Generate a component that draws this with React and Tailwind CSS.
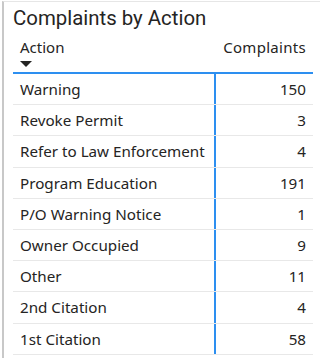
import React from "react";

const rows = [
  ["Warning", "150"],
  ["Revoke Permit", "3"],
  ["Refer to Law Enforcement", "4"],
  ["Program Education", "191"],
  ["P/O Warning Notice", "1"],
  ["Owner Occupied", "9"],
  ["Other", "11"],
  ["2nd Citation", "4"],
  ["1st Citation", "58"],
];

export default function App() {
  return (
    <div
      className="w-[320px] h-[358px] bg-white overflow-hidden text-[#252423]"
      style={{ fontFamily: '"Noto Sans", "Open Sans", sans-serif' }}
    >
      <div className="ml-[2px] mt-[1px] h-[357px] border-l-2 border-t border-l-[#c8c8c8] border-t-[#e6e6e6] pl-[9px] pr-[7px]">
        <div
          className="h-[34px] pt-[2px] text-[20.4px] leading-[28px]"
          style={{ fontFamily: 'Roboto, "Noto Sans", sans-serif' }}
        >
          Complaints by Action
        </div>
        <div className="w-[300px]">
          <div className="flex h-[38px] border-b-2 border-[#2d8ff0] text-[15px] text-[#252423]">
            <div className="w-[203px] pl-[7px] pt-[1px] leading-[20px]">
              <div>Action</div>
              <svg width="12" height="6" viewBox="0 0 12 6" className="mt-[4px]">
                <path d="M0 0 H12 L6 6 Z" fill="#252423" />
              </svg>
            </div>
            <div className="flex-1 pr-[7px] pt-[1px] text-right leading-[20px] tracking-[0.3px]">Complaints</div>
          </div>
          {rows.map(([a, c]) => (
            <div
              key={a}
              className="flex h-[31.2px] border-b border-[#e8e8e8] text-[15.2px] leading-[30px]"
            >
              <div className="w-[203px] border-r-2 border-[#2d8ff0] pl-[7px] whitespace-nowrap">
                {a}
              </div>
              <div className="flex-1 pr-[7px] text-right">{c}</div>
            </div>
          ))}
        </div>
      </div>
    </div>
  );
}
